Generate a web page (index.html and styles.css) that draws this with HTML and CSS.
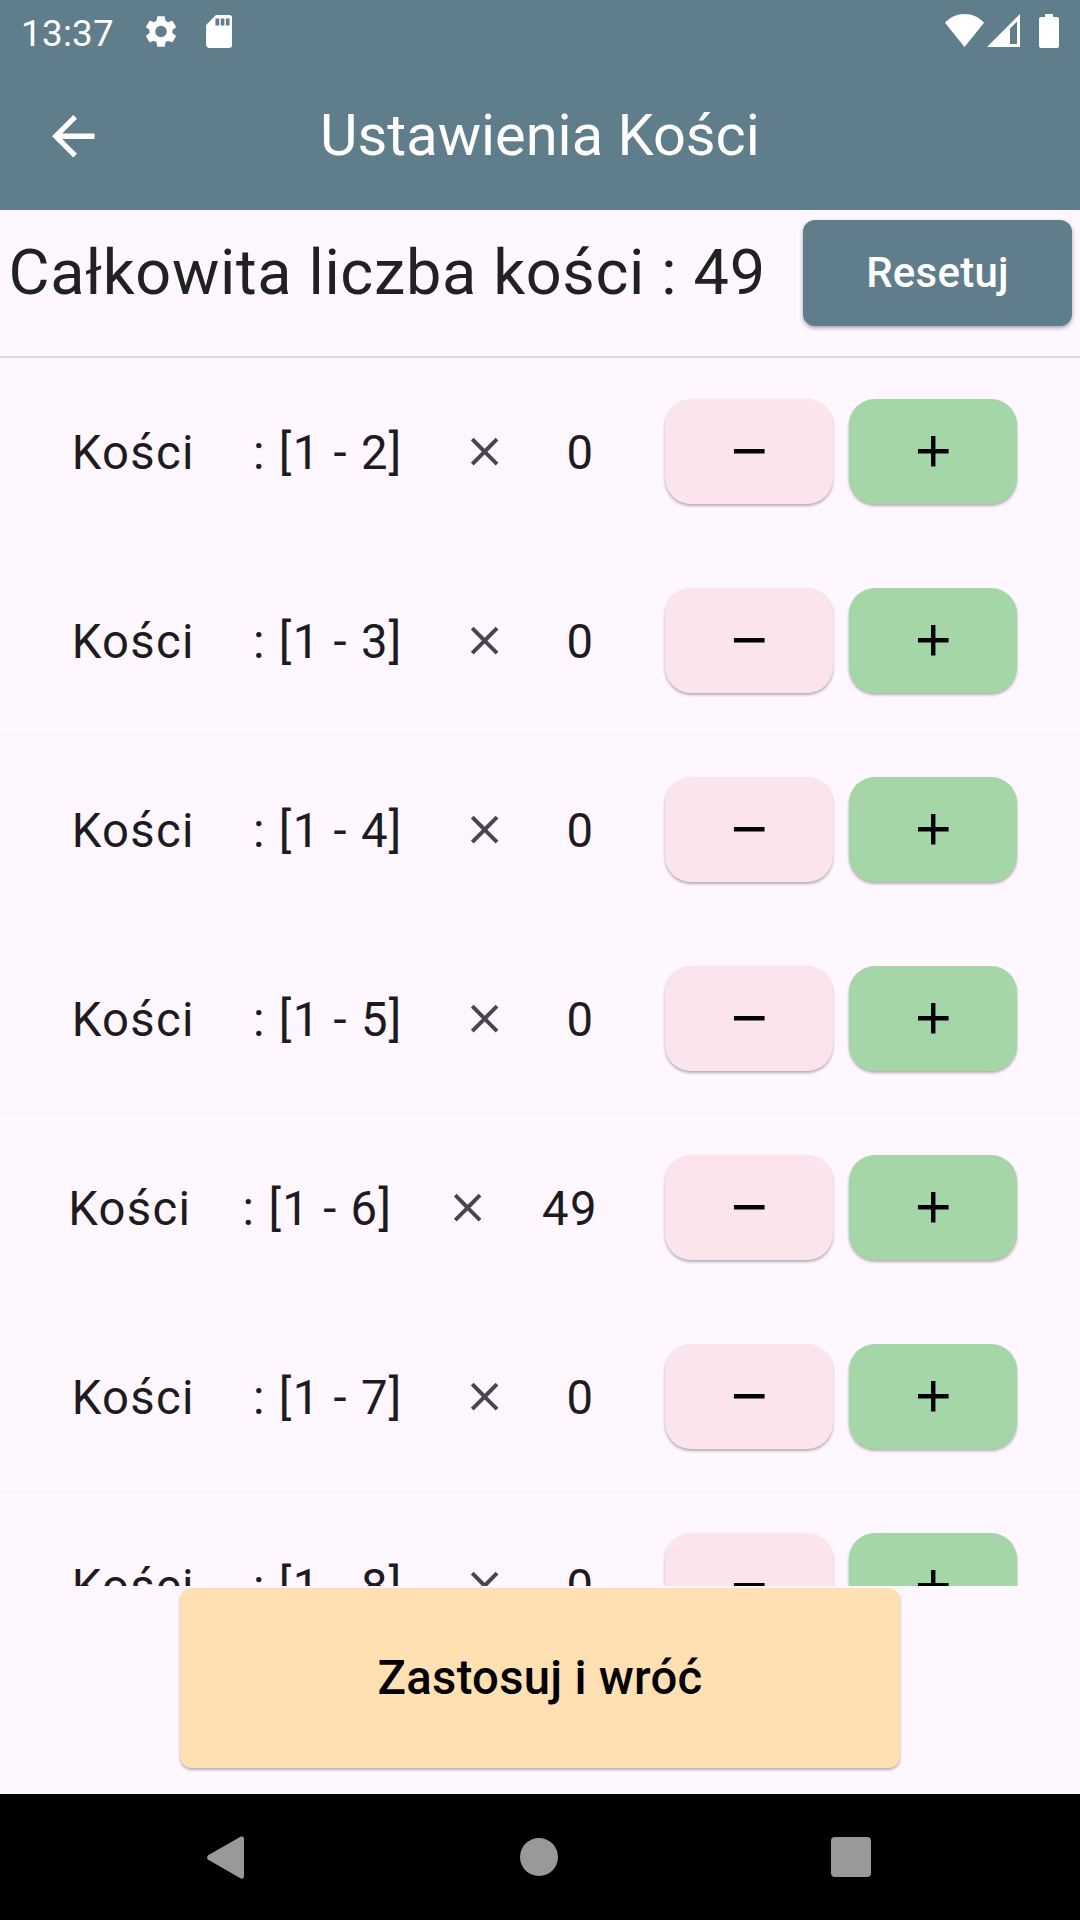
FILE: index.html
```html
<!DOCTYPE html>
<html lang="pl">
<head>
<meta charset="utf-8">
<title>Ustawienia Kości</title>
<link rel="stylesheet" href="styles.css">
</head>
<body>
<svg width="0" height="0" class="sprite" aria-hidden="true">
  <symbol id="close" viewBox="0 0 24 24"><path d="M19 6.41 17.59 5 12 10.59 6.41 5 5 6.41 10.59 12 5 17.59 6.41 19 12 13.41 17.59 19 19 17.59 13.41 12z"/></symbol>
  <symbol id="minus" viewBox="0 0 24 24"><path d="M19 13H5v-2h14z"/></symbol>
  <symbol id="plus" viewBox="0 0 24 24"><path d="M19 13h-6v6h-2v-6H5v-2h6V5h2v6h6z"/></symbol>
</svg>
<div class="screen">
  <div class="status-bar">
    <span class="clock">13:37</span>
    <svg class="gear" viewBox="2 2 20 20"><path d="M19.14 12.94c.04-.3.06-.61.06-.94s-.02-.64-.07-.94l2.03-1.58a.49.49 0 0 0 .12-.61l-1.92-3.32a.488.488 0 0 0-.59-.22l-2.39.96c-.5-.38-1.03-.7-1.62-.94l-.36-2.54a.484.484 0 0 0-.48-.41h-3.84c-.24 0-.43.17-.47.41l-.36 2.54c-.59.24-1.13.57-1.62.94l-2.39-.96a.48.48 0 0 0-.59.22L2.74 8.87c-.12.21-.08.47.12.61l2.03 1.58c-.05.3-.09.63-.09.94s.02.64.07.94l-2.03 1.58a.49.49 0 0 0-.12.61l1.92 3.32c.12.22.37.29.59.22l2.39-.96c.5.38 1.03.7 1.62.94l.36 2.54c.05.24.24.41.48.41h3.84c.24 0 .44-.17.47-.41l.36-2.54c.59-.24 1.13-.56 1.62-.94l2.39.96c.22.08.47 0 .59-.22l1.92-3.32a.49.49 0 0 0-.12-.61zM12 15.6A3.6 3.6 0 1 1 12 8.4a3.6 3.6 0 0 1 0 7.2z"/></svg>
    <svg class="sd" viewBox="4 2 16 20"><path fill-rule="evenodd" d="M18 2h-8L4.02 8 4 20c0 1.100.9 2 2 2h12c1.100 0 2-.9 2-2V4c0-1.100-.9-2-2-2zM9.700 4.100H12v4.200H9.700zM12.900 4.100h2.200v4.200h-2.200zM16 4.100h2.200v4.200H16z"/></svg>
    <svg class="wifi" viewBox="0 0 39 33"><path d="M19.500 33 0 8.800C5 3.300 12 0 19.500 0S34 3.300 39 8.800z"/></svg>
    <svg class="signal" viewBox="0 0 33 33"><path fill-rule="evenodd" d="M0 33 33 0v33zM23 14.500V30h7V7.500z"/></svg>
    <svg class="battery" viewBox="0 0 20 34"><path d="M6 0h8v3h4a2 2 0 0 1 2 2v27a2 2 0 0 1-2 2H2a2 2 0 0 1-2-2V5a2 2 0 0 1 2-2h4z"/></svg>
  </div>
  <header class="app-bar">
    <svg class="back" viewBox="4 4 16 16"><path d="M20 11H7.830l5.590-5.590L12 4l-8 8 8 8 1.410-1.410L7.830 13H20z"/></svg>
    <h1>Ustawienia Kości</h1>
  </header>
  <section class="summary">
    <span class="total">Całkowita liczba kości : 49</span>
    <button class="reset">Resetuj</button>
  </section>
  <main class="list">
    <div class="row"><div class="info"><span>Kości</span><span>: [1 - 2]</span><svg class="times"><use href="#close"/></svg><span>0</span></div><button class="step less"><svg><use href="#minus"/></svg></button><button class="step more"><svg><use href="#plus"/></svg></button></div>
    <div class="row"><div class="info"><span>Kości</span><span>: [1 - 3]</span><svg class="times"><use href="#close"/></svg><span>0</span></div><button class="step less"><svg><use href="#minus"/></svg></button><button class="step more"><svg><use href="#plus"/></svg></button></div>
    <div class="row"><div class="info"><span>Kości</span><span>: [1 - 4]</span><svg class="times"><use href="#close"/></svg><span>0</span></div><button class="step less"><svg><use href="#minus"/></svg></button><button class="step more"><svg><use href="#plus"/></svg></button></div>
    <div class="row"><div class="info"><span>Kości</span><span>: [1 - 5]</span><svg class="times"><use href="#close"/></svg><span>0</span></div><button class="step less"><svg><use href="#minus"/></svg></button><button class="step more"><svg><use href="#plus"/></svg></button></div>
    <div class="row"><div class="info"><span>Kości</span><span>: [1 - 6]</span><svg class="times"><use href="#close"/></svg><span>49</span></div><button class="step less"><svg><use href="#minus"/></svg></button><button class="step more"><svg><use href="#plus"/></svg></button></div>
    <div class="row"><div class="info"><span>Kości</span><span>: [1 - 7]</span><svg class="times"><use href="#close"/></svg><span>0</span></div><button class="step less"><svg><use href="#minus"/></svg></button><button class="step more"><svg><use href="#plus"/></svg></button></div>
    <div class="row"><div class="info"><span>Kości</span><span>: [1 - 8]</span><svg class="times"><use href="#close"/></svg><span>0</span></div><button class="step less"><svg><use href="#minus"/></svg></button><button class="step more"><svg><use href="#plus"/></svg></button></div>
  </main>
  <footer class="actions"><button class="apply">Zastosuj i wróć</button></footer>
  <nav class="nav-bar">
    <svg class="nav-back" viewBox="0 0 37 43"><path d="M1.200 19.200 33 1Q37-1 37 3v37q0 4-4 2L1.200 23.800Q-1 21.500 1.200 19.200z"/></svg>
    <span class="nav-home"></span>
    <span class="nav-recent"></span>
  </nav>
</div>
</body>
</html>
```
FILE: styles.css
```css
* { box-sizing: border-box; }
body { margin: 0; font-family: Roboto, sans-serif; }
button { border: 0; padding: 0; font: inherit; }
svg { display: block; flex: none; fill: currentColor; }
.sprite { position: absolute; }

.screen {
  width: 1080px;
  height: 1920px;
  display: flex;
  flex-direction: column;
  overflow: hidden;
  background: #fef7ff;
}

.status-bar {
  height: 63px;
  display: flex;
  align-items: flex-start;
  padding: 14px 21px 0 21px;
  background: #607d8b;
  color: #fff;
}
.clock { width: 124px; font-size: 36.75px; line-height: 40px; letter-spacing: 0.3px; }
.gear { width: 32px; height: 33px; margin-top: 1px; }
.sd { width: 26.500px; height: 33px; margin: 1px auto 0 28.500px; }
.wifi { width: 39px; height: 33px; }
.signal { width: 33px; height: 33px; margin: 0 19px 0 3px; }
.battery { width: 20px; height: 34px; }

.app-bar {
  height: 147px;
  display: grid;
  grid-template-columns: 147px 1fr 147px;
  align-items: center;
  background: #607d8b;
  color: #fff;
}
.back { width: 42.500px; height: 42.500px; margin-left: 52.250px; }
h1 { margin: 0; padding-bottom: 3px; text-align: center; font-size: 57.75px; font-weight: 400; line-height: 74px; }

.summary {
  height: 148px;
  display: flex;
  align-items: flex-start;
  justify-content: space-between;
  padding: 10px 8px 0 8.500px;
  border-bottom: 2px solid #d5d9e3;
}
.total { font-size: 63px; line-height: 105px; letter-spacing: 0.656px; color: #212121; white-space: pre; }
.reset {
  width: 269px;
  height: 105.500px;
  padding-bottom: 1px;
  border-radius: 12px;
  background: #607d8b;
  color: #fff;
  font-size: 42px;
  font-weight: 500;
  letter-spacing: 0.26px;
  box-shadow: 0 2px 4px rgba(0, 0, 0, .35);
}

.list { height: 1228px; overflow: hidden; }
.row {
  height: 189px;
  display: flex;
  align-items: center;
  gap: 16px;
  padding: 0 63px 0 42.500px;
  border-bottom: 2px solid #faf4fb;
}
.info {
  flex: 0 0 581px;
  margin-right: 25.500px;
  display: flex;
  align-items: center;
  justify-content: space-around;
  color: #1d1b20;
  font-size: 47.25px;
  line-height: 68px;
  letter-spacing: 1.31px;
  white-space: pre;
}
.info span { padding-top: 2px; }
.times { width: 47.25px; height: 47.25px; color: #49454f; }
.step {
  width: 168px;
  height: 105px;
  flex: none;
  display: grid;
  place-items: center;
  border-radius: 26px;
  color: #000;
  box-shadow: 0 2px 3px rgba(0, 0, 0, .3);
}
.step svg { width: 52.500px; height: 52.500px; }
.less { background: #fce4ec; }
.more { background: #a5d6a7; }

.actions { height: 208px; display: flex; justify-content: center; padding-top: 2px; }
.apply {
  width: 720px;
  height: 180px;
  border-radius: 12px;
  background: #ffe0b2;
  color: #000;
  font-size: 47.25px;
  font-weight: 500;
  letter-spacing: 0.26px;
  box-shadow: 0 2px 3px rgba(0, 0, 0, .3);
}

.nav-bar {
  height: 126px;
  display: grid;
  grid-template-columns: 1fr 38px 1fr;
  align-items: center;
  padding: 0 209px 0 207px;
  background: #000;
  color: #999;
}
.nav-back { width: 37px; height: 43px; }
.nav-home { width: 38px; height: 38px; border-radius: 50%; background: #999; }
.nav-recent { width: 40px; height: 40px; justify-self: end; border-radius: 4px; background: #999; }
```
